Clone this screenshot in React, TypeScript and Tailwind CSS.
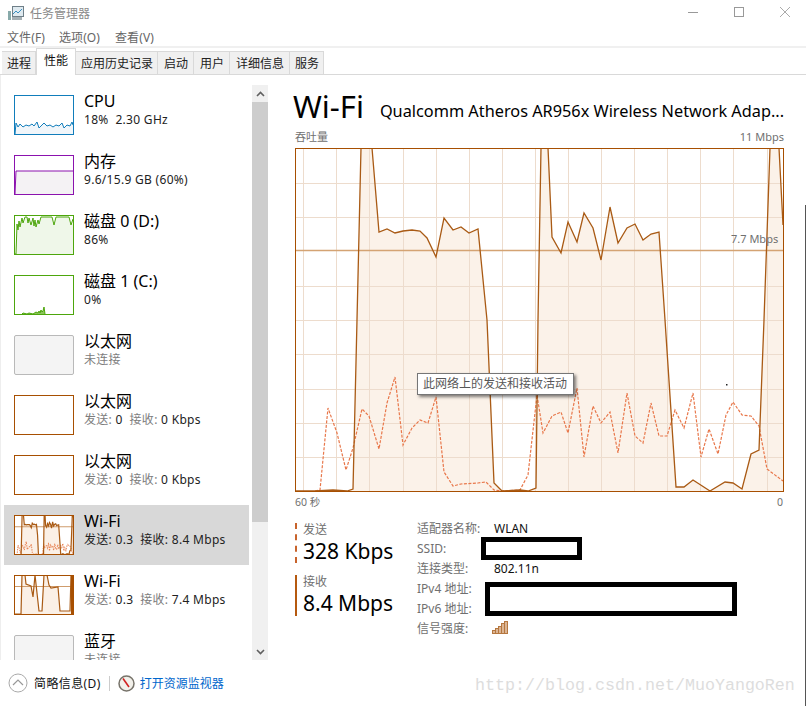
import React from "react";

const solid: [number, number][] = [[295,491],[315,491],[333,490],[347,491],[353,489],[357,320],[361,148],[372,148],[379,232],[387,229],[395,233],[403,231],[412,230],[420,231],[427,238],[436,257],[444,218],[453,230],[461,227],[469,233],[478,229],[487,320],[494,483],[502,491],[520,490],[528,491],[536,488],[538,320],[541,148],[548,148],[552,237],[561,253],[568,222],[577,242],[584,213],[593,228],[601,260],[610,207],[618,243],[627,228],[635,224],[643,240],[651,234],[659,232],[665,320],[676,487],[684,487],[693,480],[710,491],[725,482],[733,483],[742,489],[751,454],[759,450],[764,320],[770,148],[779,148],[783,225]];
const dashed: [number, number][] = [[315,491],[320,490],[328,408],[337,433],[346,470],[353,448],[362,409],[369,416],[379,449],[387,403],[395,377],[403,445],[412,428],[420,420],[428,423],[436,397],[444,472],[453,486],[461,484],[478,483],[486,482],[494,490],[502,491],[520,490],[528,475],[537,395],[543,433],[552,416],[561,412],[568,433],[577,388],[584,457],[593,406],[601,423],[610,412],[618,453],[627,393],[635,436],[643,443],[651,403],[659,436],[667,436],[675,410],[684,428],[693,393],[701,457],[709,429],[718,454],[726,415],[733,402],[742,415],[751,416],[759,426],[767,469],[783,481]];
const pts = (p: [number, number][]) => p.map((a) => a.join(",")).join(" ");
const area = (p: [number, number][]) => `295,491 ${pts(p)} 783,491`;
const vLines = [303,336,369,403,436,469,502,535,568,601,634,667,700,733,767];
const hLines = [183,217,286,320,354,389,423,457];

function MainChart() {
  return (
    <svg width="489" height="344" viewBox="295 148 489 344" className="block">
      <rect x="295" y="148" width="489" height="344" fill="#fff" />
      <polygon points={area(solid)} fill="#fbf2e9" />
      {vLines.map((x) => <line key={x} x1={x + 0.5} x2={x + 0.5} y1="149" y2="491" stroke="#eddccd" />)}
      {hLines.map((y) => <line key={y} y1={y + 0.5} y2={y + 0.5} x1="296" x2="783" stroke="#eddccd" />)}
      <line x1="296" x2="783" y1="250.5" y2="250.5" stroke="#d4a373" strokeWidth="1.5" />
      <polyline points={pts(dashed)} fill="none" stroke="#e8774a" strokeWidth="1.2" strokeDasharray="3 1.5" />
      <polyline points={pts(solid)} fill="none" stroke="#a95a14" strokeWidth="1.3" />
      <rect x="295.5" y="148.5" width="488" height="343" fill="none" stroke="#a74f01" />
      <rect x="726" y="384" width="1.5" height="1.5" fill="#222" />
    </svg>
  );
}

type Kind = "cpu" | "mem" | "disk0" | "disk1" | "off" | "net" | "wifi1" | "wifi2";

function Thumb({ kind }: { kind: Kind }) {
  const base = "block shrink-0";
  if (kind === "off") return <div className="w-[60px] h-10 shrink-0 bg-[#f4f4f4] border border-[#b9b9b9] rounded-[2px]" />;
  if (kind === "net") return <div className="w-[60px] h-10 shrink-0 bg-white border border-[#a74f01]" />;
  if (kind === "wifi1")
    return (
      <svg width="60" height="40" viewBox="295 148 489 344" preserveAspectRatio="none" className={base}>
        <rect x="295" y="148" width="489" height="344" fill="#fff" />
        <polygon points={area(solid)} fill="#fbf0e6" />
        <line x1="295" x2="783" y1="250" y2="250" stroke="#cf9c6c" strokeWidth="1" vectorEffect="non-scaling-stroke" />
        <polyline points={pts(dashed)} fill="none" stroke="#e8875a" strokeWidth="1" strokeDasharray="1.5 1" vectorEffect="non-scaling-stroke" />
        <polyline points={pts(solid)} fill="none" stroke="#a95a14" strokeWidth="1.2" vectorEffect="non-scaling-stroke" />
        <rect x="775" y="148" width="9" height="344" fill="#a74f01" />
        <rect x="295" y="148" width="489" height="344" fill="none" stroke="#a74f01" strokeWidth="2" vectorEffect="non-scaling-stroke" />
      </svg>
    );
  if (kind === "wifi2") {
    const p = "0,39 7,39 8,0 11,0 12,9 17,11 19,22 21,0 25,36 28,36 30,0 33,0 35,10 37,13 44,12 46,36 56,36 57,0";
    return (
      <svg width="60" height="40" viewBox="0 0 60 40" className={base}>
        <rect width="60" height="40" fill="#fff" />
        <polygon points={`${p} 60,0 60,40 0,40`} fill="#fbf0e6" />
        <line x1="0" x2="60" y1="11.5" y2="11.5" stroke="#cf9c6c" />
        <polyline points={p} fill="none" stroke="#a95a14" strokeWidth="1.2" />
        <rect x="57" y="0" width="3" height="40" fill="#a74f01" />
        <rect x="0.5" y="0.5" width="59" height="39" fill="none" stroke="#a74f01" />
      </svg>
    );
  }
  const cfg = {
    cpu: { c: "#117dbb", f: "#f1f6fa", p: "1,39 2,28 4,32 6,29 9,32 12,30 15,31 18,29 20,31 23,27 25,33 28,30 30,28 33,31 36,30 39,32 42,30 45,31 48,28 50,33 53,30 56,31 58,27 59,30" },
    mem: { c: "#8b12ae", f: "#f4f2f4", p: "1,39 2,16 59,16" },
    disk0: { c: "#4da60c", f: "#eff7e9", p: "1,39 2,39 3,9 4,15 5,6 6,12 8,3 9,8 11,2 13,2 14,8 15,3 17,10 19,3 20,11 21,5 22,12 24,5 25,9 27,2 38,2 40,10 42,2 55,2 57,10 59,4" },
    disk1: { c: "#4da60c", f: "#8cc45c", p: "8,39 9,38 13,39 15,38 19,39 22,37 24,38 25,36 26,38 27,35 28,37 29,36 30,32 31,39" },
  }[kind];
  return (
    <svg width="60" height="40" viewBox="0 0 60 40" className={base}>
      <rect width="60" height="40" fill="#fff" />
      <polygon points={`${cfg.p} 59,39 1,39`} fill={kind === "disk1" ? "#8cc45c" : cfg.f} />
      <polyline points={cfg.p} fill="none" stroke={cfg.c} strokeWidth="1" />
      <rect x="0.5" y="0.5" width="59" height="39" fill="none" stroke={cfg.c} />
    </svg>
  );
}

type Row = { kind: Kind; title: string; sub: React.ReactNode; selected?: boolean };
const G = ({ children }: { children: React.ReactNode }) => <span className="text-[#7d7d7d]">{children}</span>;
const rows: Row[] = [
  { kind: "cpu", title: "CPU", sub: "18%  2.30 GHz" },
  { kind: "mem", title: "内存", sub: "9.6/15.9 GB (60%)" },
  { kind: "disk0", title: "磁盘 0 (D:)", sub: "86%" },
  { kind: "disk1", title: "磁盘 1 (C:)", sub: "0%" },
  { kind: "off", title: "以太网", sub: <G>未连接</G> },
  { kind: "net", title: "以太网", sub: <><G>发送:</G> 0 <G>&nbsp;接收:</G> 0 Kbps</> },
  { kind: "net", title: "以太网", sub: <><G>发送:</G> 0 <G>&nbsp;接收:</G> 0 Kbps</> },
  { kind: "wifi1", title: "Wi-Fi", sub: <>发送: 0.3 &nbsp;接收: 8.4 Mbps</>, selected: true },
  { kind: "wifi2", title: "Wi-Fi", sub: <><G>发送:</G> 0.3 <G>&nbsp;接收:</G> 7.4 Mbps</> },
  { kind: "off", title: "蓝牙", sub: <G>未连接</G> },
];

const tabs = [
  { t: "进程", w: "w-[34px]" },
  { t: "性能", w: "w-[40px]", active: true },
  { t: "应用历史记录", w: "w-[82px]" },
  { t: "启动", w: "w-[36px]" },
  { t: "用户", w: "w-[36px]" },
  { t: "详细信息", w: "w-[60px]" },
  { t: "服务", w: "w-[34px]" },
];

const details: [string, React.ReactNode][] = [
  ["适配器名称:", "WLAN"],
  ["SSID:", ""],
  ["连接类型:", "802.11n"],
  ["IPv4 地址:", ""],
  ["IPv6 地址:", ""],
  ["信号强度:", (
    <svg width="17" height="14" viewBox="0 0 17 14" className="block -mt-[5px] -ml-[2px]">
      {[[0,10,4],[3,8,6],[6,6,8],[9,3,11],[12,1,13]].map(([x,y,h]) => (
        <rect key={x} x={x + 0.5} y={y + 0.5} width="3" height={h - 1} fill="#dcb594" stroke="#b5773f" />
      ))}
    </svg>
  )],
];

export default function App() {
  return (
    <div className="relative w-[806px] h-[706px] overflow-hidden bg-white flex flex-col text-black text-[12px] [font-family:'Noto_Sans','Noto_Sans_CJK_SC',sans-serif]">
      <div className="h-[26px] flex items-center pl-2 shrink-0">
        <svg width="16" height="15" viewBox="0 0 16 15" className="mr-[6px]">
          <rect x="4.5" y="0.5" width="11" height="10" fill="#dfeaf0" stroke="#6f7f88" />
          <polyline points="5,8 8,5 10,7 14,3" fill="none" stroke="#3b8fc0" />
          <rect x="0" y="5" width="3" height="9" fill="#8aa" />
          <rect x="4" y="11" width="10" height="3" fill="#a5b0b5" />
        </svg>
        <span className="text-[#8a8a8a] pt-[1px]">任务管理器</span>
        <div className="ml-auto flex items-center text-[#8c8c8c] -mt-[2px]">
          <svg width="12" height="12" viewBox="0 0 12 12" className="mr-[34px]"><line x1="1" x2="11" y1="6.5" y2="6.5" stroke="#999" /></svg>
          <svg width="12" height="12" viewBox="0 0 12 12" className="mr-[34px]"><rect x="1.5" y="1.5" width="9" height="9" fill="none" stroke="#999" /></svg>
          <svg width="12" height="12" viewBox="0 0 12 12" className="mr-[15px]"><path d="M1 1l10 10M11 1L1 11" stroke="#aaa" fill="none" /></svg>
        </div>
      </div>
      <div className="h-5 flex items-center gap-[14px] pl-[7px] pt-[3px] text-[#666] shrink-0 tracking-[0.1px]">
        <span>文件(F)</span><span>选项(O)</span><span className="ml-[1px]">查看(V)</span>
      </div>
      <div className="h-[2px] bg-[#f0f0f0] shrink-0" />
      <div className="h-[27px] flex items-end pl-[2px] border-b border-[#d9d9d9] shrink-0">
        {tabs.map((t) => (
          <div
            key={t.t}
            className={
              t.active
                ? `${t.w} h-[27px] -mb-px relative bg-white border border-b-0 border-[#d9d9d9] flex items-center justify-center pb-[2px] text-[#111]`
                : `${t.w} h-[23px] bg-[#f0f0f0] border-r border-t border-[#d9d9d9] flex items-center justify-center pt-[1px] pl-[1px] text-[#222]`
            }
          >
            {t.t}
          </div>
        ))}
      </div>
      <div className="flex h-[585px] shrink-0">
        <div className="w-[268px] shrink-0 flex border-l border-[#eeeeee] pt-[10px] overflow-hidden">
          <div className="w-[251px] shrink-0 pl-[3px] pr-[3px]">
            {rows.map((r, i) => (
              <div key={i} className={`h-[60px] flex items-center pl-[10px] ${r.selected ? "bg-[#d8d8d8]" : ""}`}>
                <Thumb kind={r.kind} />
                <div className="ml-[10px] -mt-[10px] flex flex-col">
                  <span className="text-[16px] leading-[20px] text-black">{r.title}</span>
                  <span className="text-[12px] leading-[18px] text-[#222] whitespace-pre tracking-[0.3px]">{r.sub}</span>
                </div>
              </div>
            ))}
          </div>
          <div className="w-4 shrink-0 bg-[#f0f0f0] flex flex-col">
            <div className="h-[17px] flex items-center justify-center">
              <svg width="9" height="6" viewBox="0 0 9 6"><path d="M1 5l3.5-3.5L8 5" fill="none" stroke="#606060" strokeWidth="1.6" /></svg>
            </div>
            <div className="h-[420px] bg-[#cdcdcd]" />
            <div className="flex-1" />
            <div className="h-[17px] flex items-center justify-center">
              <svg width="9" height="6" viewBox="0 0 9 6"><path d="M1 1l3.5 3.5L8 1" fill="none" stroke="#606060" strokeWidth="1.6" /></svg>
            </div>
          </div>
        </div>
        <div className="flex-1 pl-[27px] flex flex-col">
          <div className="h-[49px] flex items-center -ml-[2px] pt-[14px]">
            <span className="text-[31px] leading-none text-black">Wi-Fi</span>
            <span className="ml-[16px] pt-[10px] text-[16.3px] leading-none text-black whitespace-nowrap">Qualcomm Atheros AR956x Wireless Network Adap...</span>
          </div>
          <div className="w-[489px] h-[24px] flex justify-between items-end text-[11px] leading-[20px] text-[#707070] pb-[1px]">
            <span>吞吐量</span><span>11 Mbps</span>
          </div>
          <MainChart />
          <div className="w-[489px] h-5 flex justify-between items-center pt-[2px] text-[10.5px] text-[#707070]">
            <span>60 秒</span><span className="pr-[1px]">0</span>
          </div>
          <div className="flex mt-[11px]">
            <div className="w-[122px] shrink-0 flex flex-col gap-[12px]">
              <div className="h-[40px] border-l-2 border-dashed border-[#c8632b] pl-[6px] flex flex-col">
                <span className="text-[12px] leading-[14px] text-[#707070]">发送</span>
                <span className="text-[21px] leading-[28px] text-black whitespace-nowrap">328 Kbps</span>
              </div>
              <div className="h-[41px] border-l-2 border-[#b5590f] pl-[6px] flex flex-col">
                <span className="text-[12px] leading-[14px] text-[#707070]">接收</span>
                <span className="text-[21px] leading-[28px] text-black whitespace-nowrap">8.4 Mbps</span>
              </div>
            </div>
            <div className="grid grid-cols-[77px_1fr] auto-rows-[20px] items-center -mt-[4px]">
              {details.map(([k, v], i) => (
                <React.Fragment key={i}>
                  <span className="text-[#707070] whitespace-nowrap">{k}</span>
                  <span className="text-[#111]">{v}</span>
                </React.Fragment>
              ))}
            </div>
          </div>
        </div>
      </div>
      <div className="flex-1 flex items-center pl-2">
        <svg width="20" height="20" viewBox="0 0 20 20"><circle cx="10" cy="10" r="9" fill="none" stroke="#aaa" /><path d="M5 12l5-5 5 5" fill="none" stroke="#999" strokeWidth="1.2" /></svg>
        <span className="ml-[6px] text-[#111] tracking-[0.4px] pt-[1px]">简略信息(D)</span>
        <div className="ml-[8px] w-px h-[15px] bg-[#cccccc]" />
        <svg width="17" height="17" viewBox="0 0 17 17" className="ml-[8px]">
          <circle cx="8.5" cy="8.5" r="7.5" fill="#f2f0ea" stroke="#77736a" strokeWidth="1.5" />
          <path d="M5 3.5L11 12" stroke="#d02020" strokeWidth="1.6" />
        </svg>
        <span className="ml-[5px] text-[#0066cc] pt-[1px]">打开资源监视器</span>
      </div>

      {/* overlays */}
      <div className="absolute left-[731px] top-[231px] text-[11px] leading-4 text-[#707070]">7.7 Mbps</div>
      <div className="absolute left-[417px] top-[373px] w-[157px] h-[22px] bg-white border border-[#767676] shadow-[2px_2px_3px_rgba(0,0,0,0.5)] flex items-center pl-[5px] text-[#575757] whitespace-nowrap">此网络上的发送和接收活动</div>
      <div className="absolute left-[481px] top-[537px] w-[101px] h-[23px] border-[5px] border-black bg-white" />
      <div className="absolute left-[485px] top-[582px] w-[252px] h-[34px] border-[5px] border-black bg-white" />
      <div className="absolute left-[805px] top-[205px] bottom-0 w-px bg-[#555555]" />
      <div className="absolute left-[475px] top-[676px] text-[16.67px] leading-5 text-[#dddddd] whitespace-nowrap [font-family:'Liberation_Mono',monospace]">http://blog.csdn.net/MuoYangoRen</div>
    </div>
  );
}
